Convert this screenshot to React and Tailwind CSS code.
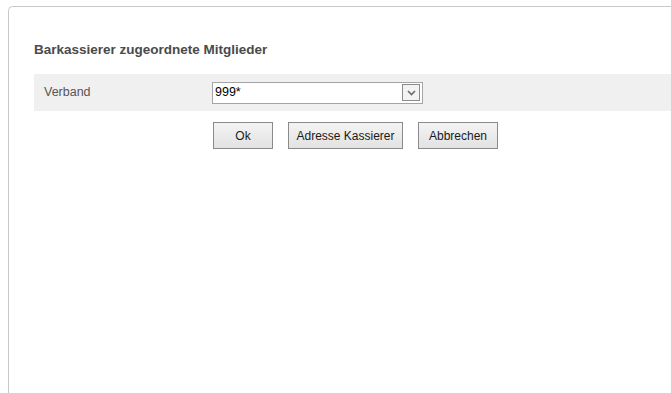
import React from "react";

function Chevron() {
  return (
    <svg width="9" height="6" viewBox="0 0 9 6" className="block">
      <path d="M1 1 L4.5 4.5 L8 1" fill="none" stroke="#6b6b6b" strokeWidth="1.6" />
    </svg>
  );
}

function Btn({ children, w }) {
  return (
    <button
      type="button"
      className={`h-[27px] ${w} border border-[#8a8a8a] bg-gradient-to-b from-[#f4f4f4] to-[#e2e2e2] text-[12px] text-[#1a1a1a] leading-none`}
    >
      {children}
    </button>
  );
}

export default function App() {
  return (
    <div
      className="w-[671px] h-[393px] overflow-hidden bg-white pl-[8px] pt-[6px]"
      style={{ fontFamily: '"Liberation Sans", Arial, sans-serif' }}
    >
      <div className="h-[400px] border-l border-t border-[#c9c9c9] rounded-tl-[5px] pl-[25px] pt-[35px]">
        <h1 className="text-[13.5px] font-bold text-[#4a4a4a] leading-[16px]">
          Barkassierer zugeordnete Mitglieder
        </h1>

        {/* form row */}
        <div className="mt-[16px] h-[37px] bg-[#f0f0f0] flex items-center">
          <div className="w-[178px] pl-[10px] text-[12.5px] text-[#555555]">Verband</div>
          <div className="w-[211px] h-[22px] border border-[#a5a5a5] bg-white flex items-center justify-between pl-[2px] pr-[2px]">
            <span className="text-[12.5px] text-black">999*</span>
            <span className="w-[18px] h-[17px] border border-[#8c8c8c] bg-[#f3f3f3] flex items-center justify-center">
              <Chevron />
            </span>
          </div>
        </div>

        <div className="mt-[11px] pl-[179px] flex gap-[15px]">
          <Btn w="w-[60px]">Ok</Btn>
          <Btn w="w-[115px]">Adresse Kassierer</Btn>
          <Btn w="w-[80px]">Abbrechen</Btn>
        </div>
      </div>
    </div>
  );
}
